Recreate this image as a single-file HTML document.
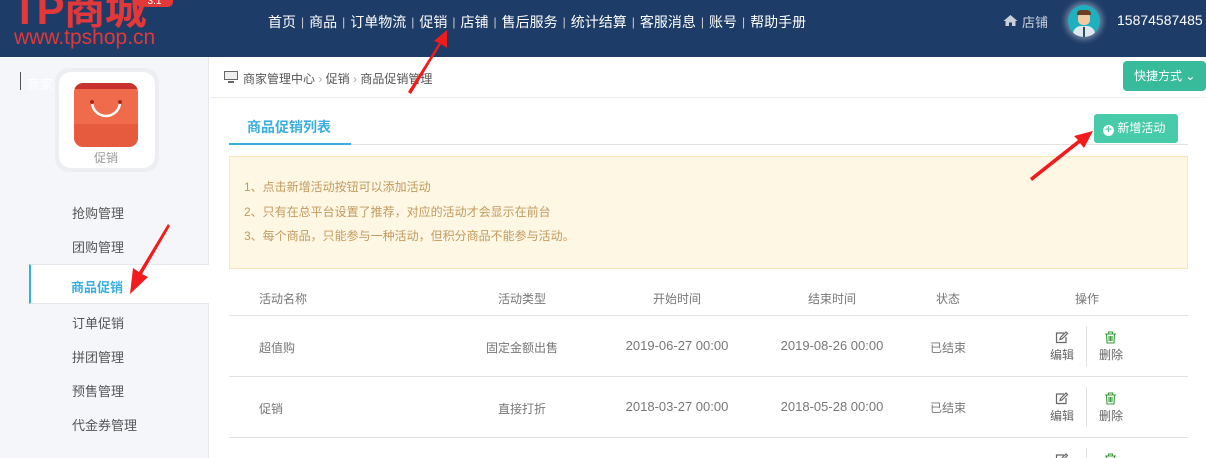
<!DOCTYPE html>
<html><head><meta charset="utf-8"><style>
*{margin:0;padding:0;box-sizing:border-box}
body{width:1206px;height:458px;overflow:hidden;position:relative;background:#fff;font-family:"Liberation Sans","Noto Sans CJK SC",sans-serif;font-size:12px;color:#666}
.a{position:absolute;white-space:nowrap}
#hd{position:absolute;left:0;top:0;width:1206px;height:57px;background:#1d3c68}
.nav{top:12px;font-size:14px;color:#fff}
.sep{color:#ccc;margin:0 5px;font-size:12px;position:relative;top:-1px}
#sb{position:absolute;left:0;top:57px;width:209px;height:401px;background:#f5f6fa;border-right:1px solid #e6e8ee}
.mi{left:72px;font-size:13px;color:#555}
.c{text-align:center;transform:translateX(-50%)}
.hl{position:absolute;left:229px;width:959px;height:1px;background:#e2e2e2}
.op{font-size:12px;color:#666;text-align:center}
.d{font-size:13px}
</style></head><body>
<div id="hd"></div>
<div class="a" style="left:12px;top:-24px;font-size:42px;font-weight:bold;color:#e2383a;letter-spacing:-1px">TP商城</div>
<div class="a" style="left:136px;top:-7px;width:37px;height:14px;background:#e2383a;border-radius:5px;color:#fff;font-size:10px;text-align:center;line-height:17px">3.1</div>
<div class="a" style="left:14px;top:26px;font-size:21px;color:#e2383a">www.tpshop.cn</div>
<div class="a nav" style="left:268px">首页<span class="sep">|</span>商品<span class="sep">|</span>订单物流<span class="sep">|</span>促销<span class="sep">|</span>店铺<span class="sep">|</span>售后服务<span class="sep">|</span>统计结算<span class="sep">|</span>客服消息<span class="sep">|</span>账号<span class="sep">|</span>帮助手册</div>
<svg class="a" style="left:1003px;top:14px" width="15" height="13"><path d="M7.5 1 L14.5 7 L12.5 7 L12.5 12 L9 12 L9 8.5 L6 8.5 L6 12 L2.5 12 L2.5 7 L0.5 7 Z" fill="#c8d0dc"/></svg>
<div class="a" style="left:1022px;top:12px;font-size:13px;color:#c8d0dc">店铺</div>
<div class="a" style="left:1068px;top:5px;width:32px;height:32px;border-radius:50%;background:#1fb0bf;box-shadow:0 0 6px 3px rgba(255,255,255,.35);overflow:hidden">
<div style="position:absolute;left:10px;top:7px;width:12px;height:13px;border-radius:5px;background:#f3c9a2"></div>
<div style="position:absolute;left:9px;top:5px;width:14px;height:5px;border-radius:4px 4px 0 0;background:#6b3d22"></div>
<div style="position:absolute;left:5px;top:21px;width:22px;height:12px;border-radius:8px 8px 0 0;background:#dfe6ec"></div>
<div style="position:absolute;left:15px;top:22px;width:2px;height:10px;background:#2c4a6a"></div></div>
<div class="a" style="left:1117px;top:12px;font-size:14px;color:#fff">15874587485</div>

<div id="sb"></div>
<div class="a" style="left:20px;top:72px;width:1px;height:18px;background:#555"></div>
<div class="a" style="left:27px;top:74px;font-size:13px;color:#fff">商家</div>
<div class="a" style="left:55px;top:68px;width:104px;height:104px;border-radius:14px;background:#eceef1"></div>
<div class="a" style="left:59px;top:72px;width:96px;height:96px;border-radius:12px;background:#fff"></div>
<div class="a" style="left:74px;top:83px;width:64px;height:64px;border-radius:9px;background:linear-gradient(#c8322e 0,#c8322e 6px,#ef6b4c 6px,#ef6b4c 41px,#e65a3e 41px)"></div>
<svg class="a" style="left:74px;top:83px" width="64" height="64"><path d="M18 19 A14 14 0 0 0 46 19" fill="none" stroke="#fff" stroke-width="2.5"/><circle cx="18" cy="19" r="2" fill="#a8261f"/><circle cx="46" cy="19" r="2" fill="#a8261f"/></svg>
<div class="a" style="left:94px;top:149px;font-size:12px;color:#999">促销</div>
<div class="a mi" style="top:203px">抢购管理</div>
<div class="a mi" style="top:237px">团购管理</div>
<div class="a" style="left:29px;top:264px;width:180px;height:40px;background:#fff;border-left:2px solid #3aafdf;border-top:1px solid #e6e8ee;border-bottom:1px solid #e6e8ee"></div>
<div class="a" style="left:71px;top:277px;font-size:13px;font-weight:bold;color:#3aafdf">商品促销</div>
<div class="a mi" style="top:313px">订单促销</div>
<div class="a mi" style="top:347px">拼团管理</div>
<div class="a mi" style="top:381px">预售管理</div>
<div class="a mi" style="top:415px">代金券管理</div>

<div class="a" style="left:210px;top:97px;width:996px;height:1px;background:#eee"></div>
<svg class="a" style="left:224px;top:71px" width="14" height="12"><rect x="0.5" y="0.5" width="13" height="8" fill="#eee" stroke="#666"/><rect x="4" y="10" width="6" height="2" fill="#666"/></svg>
<div class="a" style="left:243px;top:70px;font-size:12px;color:#555">商家管理中心 <span style="color:#aaa">›</span> 促销 <span style="color:#aaa">›</span> 商品促销管理</div>
<div class="a" style="left:1123px;top:61px;width:83px;height:30px;background:#37bb9b;border-radius:4px;color:#fff;font-size:12px;line-height:30px;padding-left:11px">快捷方式 ⌄</div>

<div class="a" style="left:247px;top:117px;font-size:14px;font-weight:bold;color:#3aafdf">商品促销列表</div>
<div class="hl" style="top:144px"></div>
<div class="a" style="left:229px;top:143px;width:122px;height:2px;background:#3aafdf"></div>
<div class="a" style="left:1094px;top:114px;width:84px;height:29px;background:#48cba9;border-radius:3px;color:#fff;font-size:12px;line-height:29px;padding-left:9px"><span style="display:inline-block;width:11px;height:11px;border-radius:50%;background:#fff;color:#48cba9;font-size:11px;line-height:11px;text-align:center;font-weight:bold;vertical-align:-1px">+</span> 新增活动</div>

<div class="a" style="left:229px;top:156px;width:959px;height:113px;background:#fdf7e4;border:1px solid #f8e6c0"></div>
<div class="a" style="left:244px;top:175px;font-size:12px;color:#c49a5e;line-height:24.5px">1、点击新增活动按钮可以添加活动<br>2、只有在总平台设置了推荐，对应的活动才会显示在前台<br>3、每个商品，只能参与一种活动，但积分商品不能参与活动。</div>

<div class="a" style="left:259px;top:290px;color:#777">活动名称</div>
<div class="a c" style="left:522px;top:290px;color:#777">活动类型</div>
<div class="a c" style="left:677px;top:290px;color:#777">开始时间</div>
<div class="a c" style="left:832px;top:290px;color:#777">结束时间</div>
<div class="a c" style="left:948px;top:290px;color:#777">状态</div>
<div class="a c" style="left:1087px;top:290px;color:#777">操作</div>
<div class="hl" style="top:315px"></div>
<div class="hl" style="top:376px"></div>
<div class="hl" style="top:437px"></div>

<div class="a" style="left:259px;top:339px;color:#777">超值购</div>
<div class="a c" style="left:522px;top:339px;color:#777">固定金额出售</div>
<div class="a c d" style="left:677px;top:338px;color:#777">2019-06-27 00:00</div>
<div class="a c d" style="left:832px;top:338px;color:#777">2019-08-26 00:00</div>
<div class="a c" style="left:948px;top:339px;color:#777">已结束</div>
<div class="a" style="left:259px;top:400px;color:#777">促销</div>
<div class="a c" style="left:522px;top:400px;color:#777">直接打折</div>
<div class="a c d" style="left:677px;top:399px;color:#777">2018-03-27 00:00</div>
<div class="a c d" style="left:832px;top:399px;color:#777">2018-05-28 00:00</div>
<div class="a c" style="left:948px;top:399px;color:#777">已结束</div>

<svg class="a" style="left:0;top:0" width="1206" height="458">
<defs>
<g id="ed" fill="none" stroke="#666" stroke-width="1.2"><path d="M9 2 L1.5 2 L1.5 11.5 L11 11.5 L11 6"/><path d="M5 8.5 L5.5 6.5 L11 1 L12.5 2.5 L7 8 Z"/></g>
<g id="tr" fill="none" stroke="#3a9a3a" stroke-width="1.1"><path d="M1 3 L12 3 M4.5 3 L4.5 1 L8.5 1 L8.5 3 M2.5 3 L3 12 L10 12 L10.5 3 M5 5 L5 10 M6.5 5 L6.5 10 M8 5 L8 10"/></g>
</defs>
<use href="#ed" x="1055" y="331"/><use href="#tr" x="1104" y="331"/>
<use href="#ed" x="1055" y="392"/><use href="#tr" x="1104" y="392"/>
<use href="#ed" x="1055" y="453"/><use href="#tr" x="1104" y="453"/>
<rect x="1086" y="326" width="1" height="40" fill="#e2e2e2"/>
<rect x="1086" y="387" width="1" height="40" fill="#e2e2e2"/>
<rect x="1086" y="448" width="1" height="10" fill="#e2e2e2"/>
<g fill="#f21b1b">
<path d="M408 92 L411 94 L441 44 L447 48 L447 30 L434 41 L439 43 Z"/>
<path d="M170 226 L168 224 L139 272 L133 268 L130 294 L148 277 L142 274 Z"/>
<path d="M1030 178 L1032 181 L1080 143 L1084 148 L1093 131 L1074 136 L1078 140 Z"/>
</g></svg>
<div class="a op" style="left:1050px;top:346px">编辑</div>
<div class="a op" style="left:1099px;top:346px">删除</div>
<div class="a op" style="left:1050px;top:407px">编辑</div>
<div class="a op" style="left:1099px;top:407px">删除</div>
</body></html>
